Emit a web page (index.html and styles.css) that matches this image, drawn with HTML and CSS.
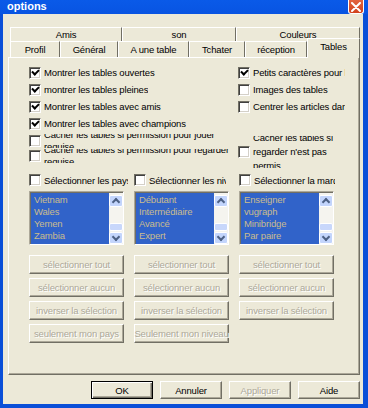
FILE: index.html
```html
<!DOCTYPE html>
<html lang="fr">
    <head>
        <title>options</title>
        <link rel="stylesheet" href="styles.css">
    </head>
    <body>
        <div class="window">
            <div class="titlebar">
                <span class="title">options</span>
                <span class="close">
                    <svg width="10" height="10" viewBox="0 0 10 10"><path d="M1 1 L9 9 M9 1 L1 9" stroke="#fff" stroke-width="2" stroke-linecap="round"/></svg>
                </span>
            </div>
            <div class="frame">
                <div class="client">
                    <div class="tabs">
                        <div class="tabrow back">
                            <div class="tab t-amis">Amis</div>
                            <div class="tab t-son">son</div>
                            <div class="tab t-couleurs">Couleurs</div>
                        </div>
                        <div class="tabrow front">
                            <div class="tab t-profil">Profil</div>
                            <div class="tab t-general">Général</div>
                            <div class="tab t-table">A une table</div>
                            <div class="tab t-tchater">Tchater</div>
                            <div class="tab t-reception">réception</div>
                            <div class="tab t-tables selected">Tables</div>
                        </div>
                    </div>

                    <div class="panel">
                        <div class="top">
                            <div class="leftcol">
                                <div class="chk"><span class="box on"></span><span class="lbl">Montrer les tables ouvertes</span></div>
                                <div class="chk"><span class="box on"></span><span class="lbl">montrer les tables pleines</span></div>
                                <div class="chk"><span class="box on"></span><span class="lbl">Montrer les tables avec amis</span></div>
                                <div class="chk"><span class="box on"></span><span class="lbl">Montrer les tables avec champions</span></div>
                                <div class="chk clipped first"><span class="box"></span><span class="lbl multi">Cacher les tables si permission pour jouer<br>requise</span></div>
                                <div class="chk clipped"><span class="box"></span><span class="lbl multi">Cacher les tables si permission pour regarder<br>requise</span></div>
                            </div>
                            <div class="rightcol">
                                <div class="chk"><span class="box on"></span><span class="lbl">Petits caractères pour les tables</span></div>
                                <div class="chk"><span class="box"></span><span class="lbl">Images des tables</span></div>
                                <div class="chk"><span class="box"></span><span class="lbl">Centrer les articles dans</span></div>
                                <div class="chk clipped tall"><span class="box"></span><span class="lbl multi">Cacher les tables si<br>regarder n'est pas<br>permis</span></div>
                            </div>
                        </div>

                        <div class="cols">
                            <div class="col">
                                <div class="chk sel"><span class="box"></span><span class="lbl clip-a">Sélectionner les pays</span></div>
                                <div class="list">
                                    <div class="items">
                                        <div>Vietnam</div><div>Wales</div><div>Yemen</div><div>Zambia</div><div>Zimbabwe</div>
                                    </div>
                                    <div class="sbar"><span class="sb-btn up"></span><span class="sb-track"></span><span class="sb-thumb"></span><span class="sb-btn down"></span></div>
                                </div>
                                <div class="btns">
                                    <div class="btn off">sélectionner tout</div>
                                    <div class="btn off">sélectionner aucun</div>
                                    <div class="btn off">inverser la sélection</div>
                                    <div class="btn off">seulement mon pays</div>
                                </div>
                            </div>
                            <div class="col">
                                <div class="chk sel"><span class="box"></span><span class="lbl clip-b">Sélectionner les niveaux</span></div>
                                <div class="list">
                                    <div class="items">
                                        <div>Débutant</div><div>Intermédiaire</div><div>Avancé</div><div>Expert</div><div>Niveau Mondial</div>
                                    </div>
                                    <div class="sbar"><span class="sb-btn up"></span><span class="sb-track"></span><span class="sb-thumb"></span><span class="sb-btn down"></span></div>
                                </div>
                                <div class="btns">
                                    <div class="btn off">sélectionner tout</div>
                                    <div class="btn off">sélectionner aucun</div>
                                    <div class="btn off">inverser la sélection</div>
                                    <div class="btn off">Seulement mon niveau</div>
                                </div>
                            </div>
                            <div class="col">
                                <div class="chk sel"><span class="box"></span><span class="lbl clip-c">Sélectionner la marque</span></div>
                                <div class="list">
                                    <div class="items">
                                        <div>Enseigner</div><div>vugraph</div><div>Minibridge</div><div>Par paire</div><div>Par équipe</div>
                                    </div>
                                    <div class="sbar"><span class="sb-btn up"></span><span class="sb-track"></span><span class="sb-thumb"></span><span class="sb-btn down"></span></div>
                                </div>
                                <div class="btns">
                                    <div class="btn off">sélectionner tout</div>
                                    <div class="btn off">sélectionner aucun</div>
                                    <div class="btn off">inverser la sélection</div>
                                </div>
                            </div>
                        </div>
                    </div>

                    <div class="actions">
                        <div class="btn dlg default">OK</div>
                        <div class="btn dlg">Annuler</div>
                        <div class="btn dlg off">Appliquer</div>
                        <div class="btn dlg">Aide</div>
                    </div>
                </div>
            </div>
        </div>
    </body>
</html>
```

FILE: styles.css
```css
* {
    box-sizing: border-box;
}
body {
    margin: 0;
    width: 368px;
    height: 408px;
    overflow: hidden;
    background: #0a4fd8;
    font-family: "Liberation Sans", Arial, sans-serif;
    font-size: 9.5px;
    letter-spacing: -0.15px;
    color: #000;
}
.window {
    height: 408px;
    display: flex;
    flex-direction: column;
}
.titlebar {
    height: 14px;
    display: flex;
    justify-content: space-between;
    align-items: flex-start;
    padding: 0 4px 0 7px;
    background: linear-gradient(#0a5ae8, #0854e2);
}
.title {
    color: #fff;
    font-weight: bold;
    font-size: 11px;
    letter-spacing: 0;
    line-height: 11px;
    margin-top: 1px;
}
.close {
    width: 16px;
    height: 14px;
    background: linear-gradient(#e2643f, #d2421c);
    border: 1px solid #fff;
    border-top: none;
    border-radius: 0 0 3px 3px;
    display: flex;
    align-items: center;
    justify-content: center;
}
.close svg {
    display: block;
}
.frame {
    flex: 1;
    padding: 0 5px 4px 3px;
    display: flex;
}
.client {
    flex: 1;
    background: #ece9d8;
    padding-top: 13px;
    display: flex;
    flex-direction: column;
}

/* tabs */
.tabs {
    margin-left: 7px;
    width: 350px;
}
.tabrow {
    display: flex;
    align-items: flex-start;
}
.tab {
    height: 14px;
    line-height: 13px;
    text-align: center;
    white-space: nowrap;
    border-top: 1px solid #fff;
    border-left: 1px solid #fff;
    border-right: 1px solid #716f64;
    background: #ece9d8;
}
.front .tab {
    height: 16px;
    line-height: 15px;
}
.t-amis { width: 112px; }
.t-son { width: 114px; }
.t-couleurs { width: 124px; }
.t-profil { width: 50px; }
.t-general { width: 58px; }
.t-table { width: 71px; }
.t-tchater { width: 56px; }
.t-reception { width: 62px; }
.t-tables { width: 53px; }
.tab.selected {
    position: relative;
    z-index: 1;
    height: 20px;
    margin-top: -3px;
    margin-bottom: -1px;
    line-height: 15px;
}

/* panel */
.panel {
    margin-left: 5px;
    width: 352px;
    height: 318px;
    border: 1px solid;
    border-color: #fff #716f64 #716f64 #fff;
    box-shadow: inset -1px -1px #aca899;
    padding: 6px 0 0 20px;
}
.top {
    display: flex;
    height: 104px;
}
.leftcol {
    width: 201px;
    overflow: hidden;
}
.rightcol {
    width: 107px;
    margin-left: 8px;
    overflow: hidden;
}
.chk {
    height: 17px;
    display: flex;
    align-items: center;
    gap: 3px;
    white-space: nowrap;
}
.box {
    flex: none;
    width: 12px;
    height: 12px;
    background: #fff;
    border: 1px solid;
    border-color: #716f64 #fff #fff #716f64;
    box-shadow: inset 1px 1px #404040, inset -1px -1px #d4d0c8;
    display: flex;
    align-items: center;
    justify-content: center;
}
.box.on::after {
    content: "";
    width: 5px;
    height: 3px;
    border-left: 2px solid #000;
    border-bottom: 2px solid #000;
    transform: translate(0, -1px) rotate(-45deg);
}
.lbl {
    overflow: hidden;
}
.clipped {
    height: 14px;
    overflow: hidden;
    margin-top: 1px;
}
.clipped.first {
    margin-top: 2px;
}
.multi {
    line-height: 12px;
}
.clipped.tall {
    height: 32px;
    margin-top: 21px;
}
.clipped.tall .multi {
    line-height: 14px;
}

/* three columns */
.cols {
    display: grid;
    grid-template-columns: 95px 95px 95px;
    column-gap: 10px;
    margin-top: 5px;
}
.chk.sel {
    height: 14px;
}
.clip-a { flex: none; width: 84px; }
.clip-b { flex: none; width: 77px; }
.clip-c { flex: none; width: 81px; }
.list {
    margin-top: 4px;
    height: 54px;
    display: flex;
    border: 1px solid;
    border-color: #aca899 #fff #fff #aca899;
    box-shadow: inset 1px 1px #716f64;
    padding: 1px 0 0 1px;
}
.items {
    flex: 1;
    overflow: hidden;
    background: #3163c9;
    color: #c9bc8e;
    line-height: 12px;
    padding: 1px 0 0 3px;
    white-space: nowrap;
}
.sbar {
    width: 14px;
    background: #f5f4ef;
    display: flex;
    flex-direction: column;
    padding-top: 2px;
}
.sb-btn {
    height: 12px;
    background: #c3d5fc;
    border: 1px solid #fff;
    border-radius: 2px;
    display: flex;
    align-items: center;
    justify-content: center;
}
.sb-btn::after {
    content: "";
    width: 4px;
    height: 4px;
    border-left: 2px solid #4d6185;
    border-top: 2px solid #4d6185;
    transform: translateY(1px) rotate(45deg);
}
.sb-btn.down::after {
    transform: translateY(-1px) rotate(225deg);
}
.sb-track {
    flex: 1;
}
.sb-thumb {
    height: 8px;
    background: #c8d7fb;
    border: 1px solid #fff;
    border-radius: 2px;
    margin-bottom: 1px;
}
.btns {
    margin-top: 10px;
    display: flex;
    flex-direction: column;
    gap: 4px;
}

/* buttons */
.btn {
    height: 19px;
    display: flex;
    align-items: center;
    justify-content: center;
    white-space: nowrap;
    background: #ece9d8;
    border: 1px solid;
    border-color: #fff #716f64 #716f64 #fff;
    box-shadow: inset -1px -1px #aca899;
}
.btn.off {
    color: #aca899;
    text-shadow: 1px 1px #fff;
}
.actions {
    margin-top: 6px;
    display: flex;
    justify-content: flex-end;
    gap: 7px;
    padding-right: 3px;
}
.btn.dlg {
    width: 62px;
    height: 18px;
}
.btn.default {
    border: 1px solid #000;
    box-shadow: inset 1px 1px #fff, inset -1px -1px #716f64, inset -2px -2px #aca899;
}
```
